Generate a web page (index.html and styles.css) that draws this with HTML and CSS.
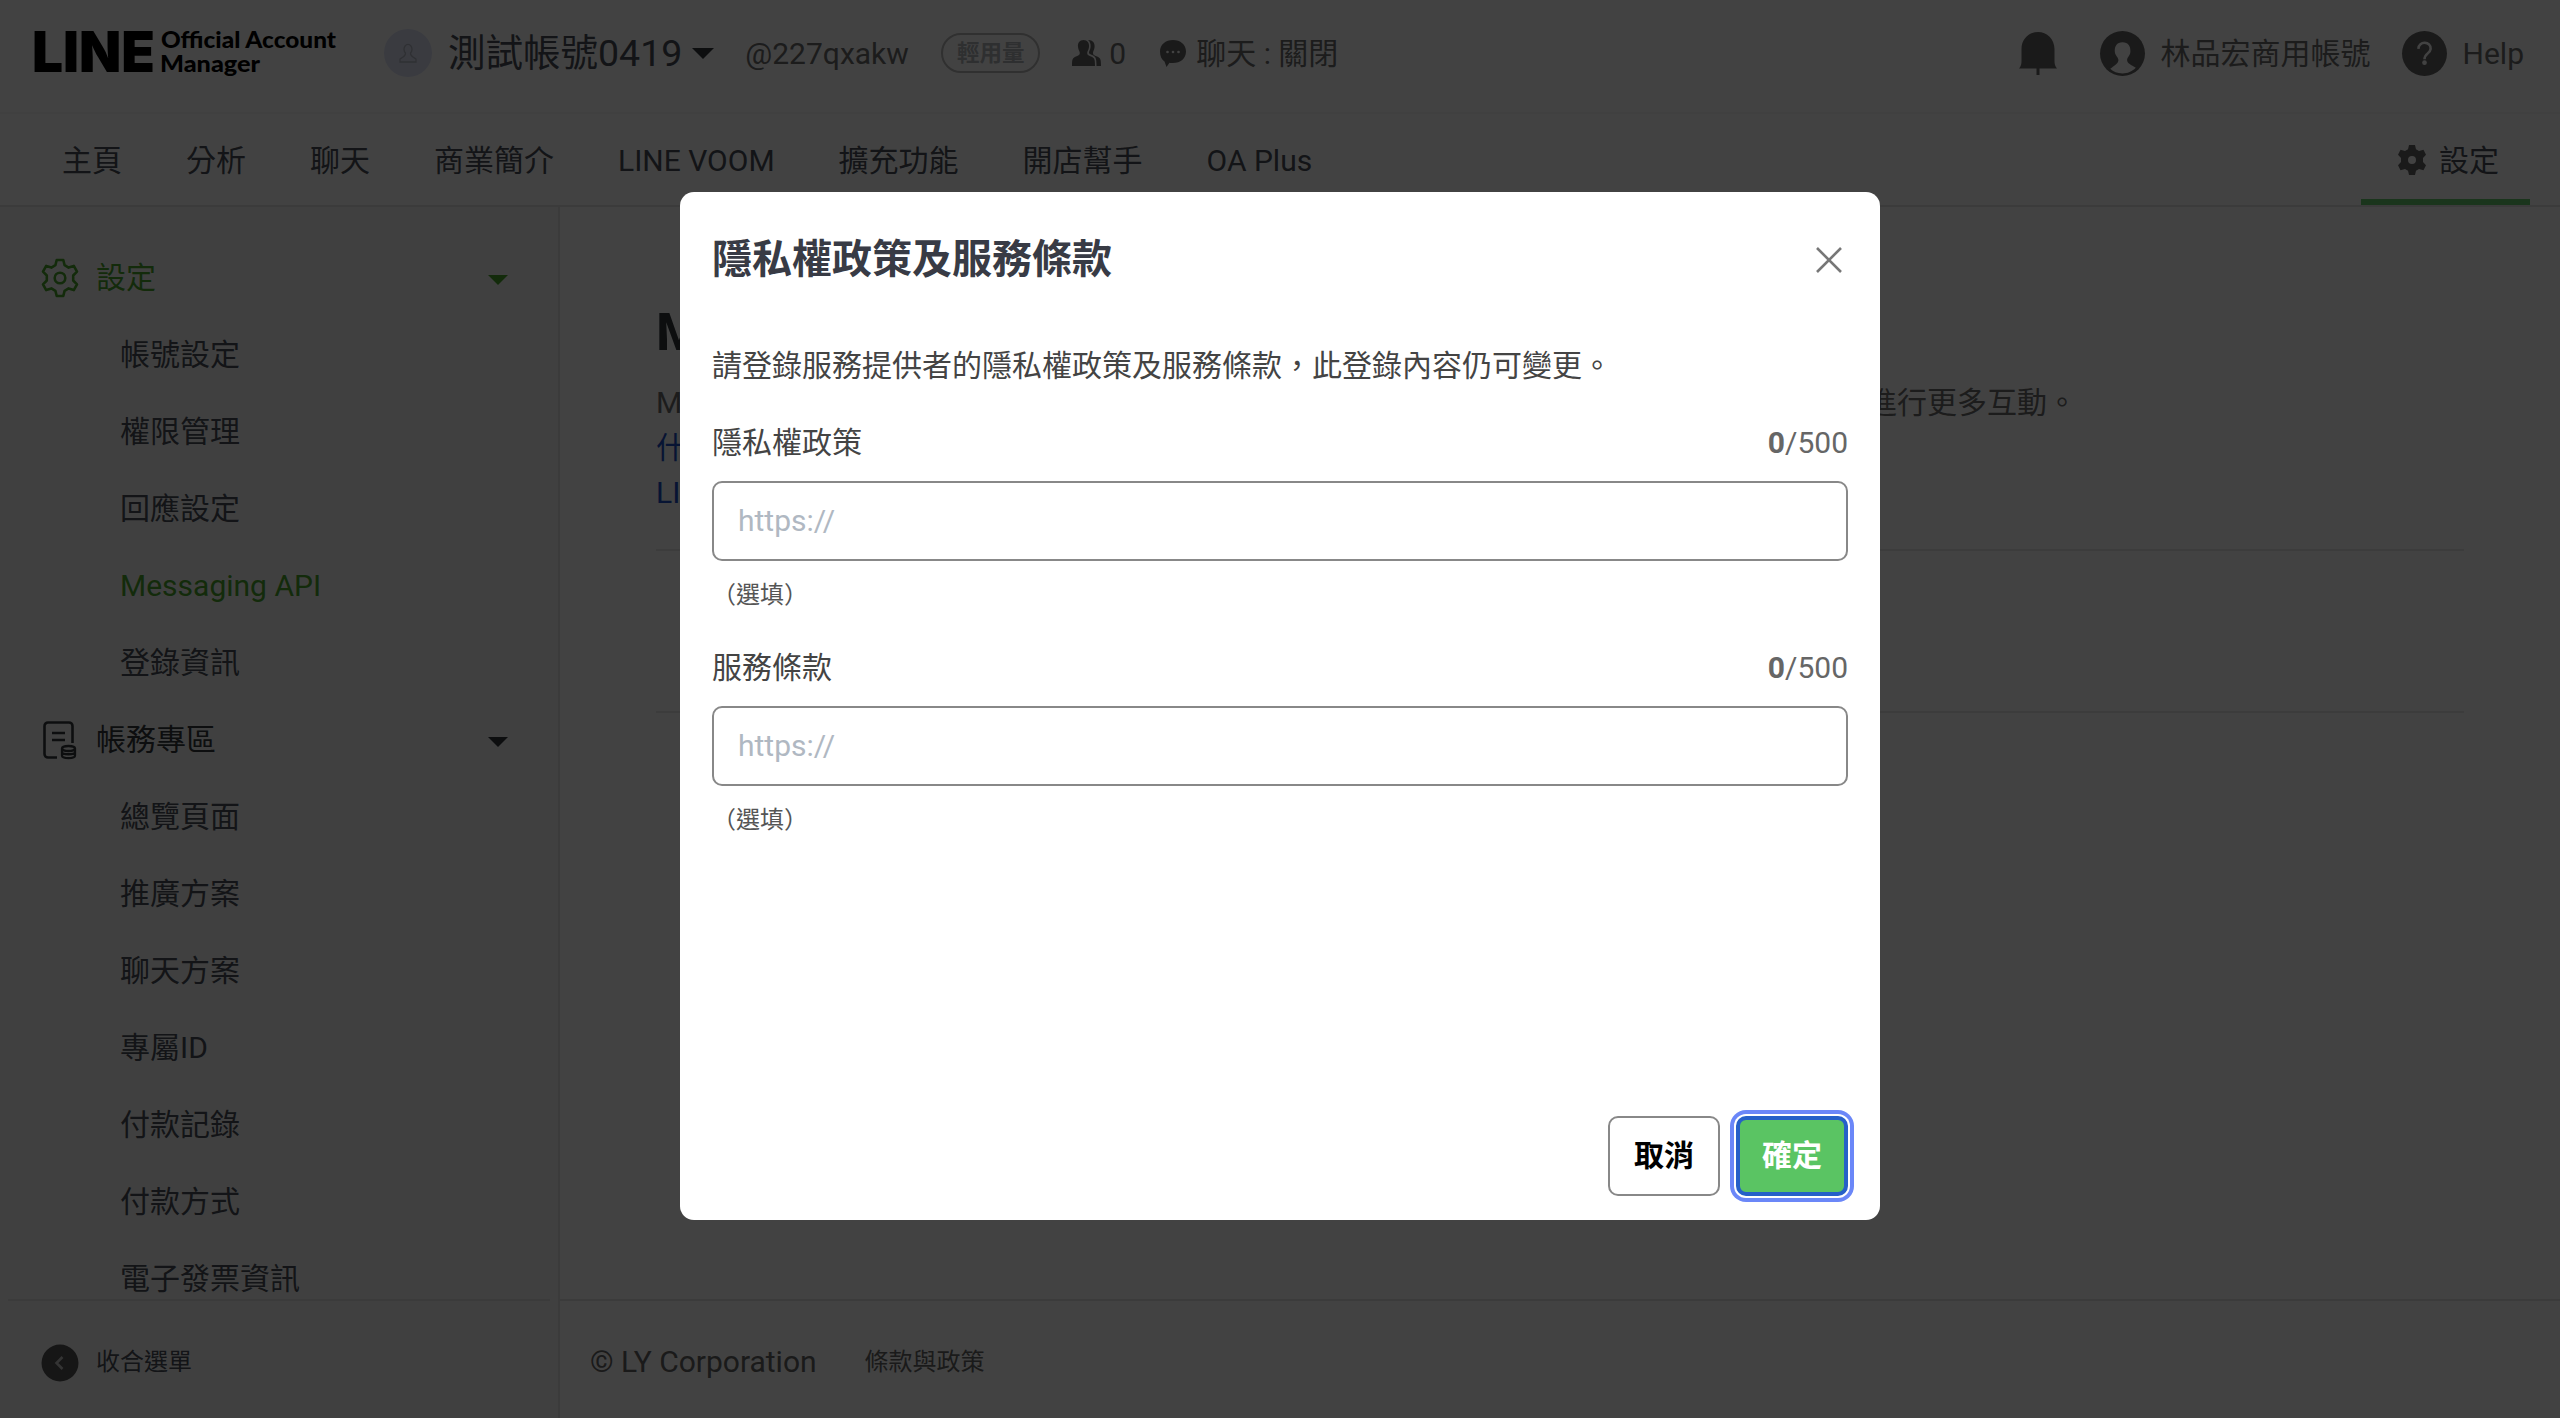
FILE: index.html
```html
<!DOCTYPE html>
<html lang="zh-Hant">
<head>
<meta charset="utf-8">
<title>LINE Official Account Manager</title>
<link rel="stylesheet" href="styles.css">
</head>
<body>
<div class="app">
  <header class="header">
    <svg class="logo" width="302" height="50" viewBox="0 0 302 50">
      <text class="logo-line" x="-4" y="44" textLength="123" lengthAdjust="spacingAndGlyphs">LINE</text>
      <text class="logo-sub" x="125" y="20" textLength="175" lengthAdjust="spacingAndGlyphs">Official Account</text>
      <text class="logo-sub" x="124" y="44" textLength="100" lengthAdjust="spacingAndGlyphs">Manager</text>
    </svg>
    <span class="avatar"><svg width="20" height="20" viewBox="0 0 20 20" fill="none" stroke="#b4b8c4" stroke-width="1.3"><path d="M7.500 10a4 4.800 0 1 1 5 0c0 3 1.500 3.500 5.500 6V19H2v-3c4-2.500 5.500-3 5.500-6z"/></svg></span>
    <span class="acct-name">測試帳號0419</span>
    <i class="caret caret-name"></i>
    <span class="acct-id">@227qxakw</span>
    <span class="badge">輕用量</span>
    <svg class="ic-users" width="30" height="26" viewBox="0 0 30 26"><path d="M11.500 0c4 0 6 3 5.500 7-.3 3-1.800 4-1.800 6s1 2.300 3.800 3.500c3.500 1.500 4 2.500 4 9.500H0c0-7 .5-8 4-9.500 2.800-1.200 3.800-1.500 3.800-3.500S6.300 10 6 7c-.5-4 1.500-7 5.500-7z"/><path d="M16 0c4.500-.3 7 3 6.600 7-.3 3-1.600 4-1.600 6s1 2.300 4 3.500c3.500 1.500 4 2.500 4 9.500h-4.500c0-8-.8-9.500-4.500-11-2.500-1-3-1.200-3-2.500 0-1.500 1.300-2.500 1.600-5.500C18.900 4 18 1.500 16 0z"/></svg>
    <span class="count">0</span>
    <svg class="ic-chat" width="28" height="28" viewBox="0 0 28 28"><path d="M14 1c7.500 0 13 4.500 13 11.500S21.500 24 14 24c-1.500 0-2.500 0-3.500-.3L7.500 28l-2-5.500C2.500 20.500 1 17 1 12.500 1 5.500 6.500 1 14 1z"/><g fill="#fff"><circle cx="8.500" cy="13" r="1.300"/><circle cx="14" cy="13" r="1.300"/><circle cx="19.500" cy="13" r="1.300"/></g></svg>
    <span class="chat">聊天 : 關閉</span>
    <div class="header-right">
      <svg class="ic-bell" width="38" height="43" viewBox="0 0 38 43"><path d="M19 0C28 0 35.500 7 35.500 17v12c0 3 .5 5 2.500 7.500H20.500V43h-3V36.500H0C2 34 2.500 32 2.500 29V17C2.500 7 10 0 19 0z"/></svg>
      <svg class="ic-me" width="45" height="45" viewBox="0 0 44 44"><circle cx="22" cy="22" r="22"/><path fill="#fff" d="M22 11c5.500 0 8.200 4 7.700 9.500-.4 4-3.200 5-3.200 8 0 2.800 4 4.500 8.500 7.500C31 40 27 41.500 22 41.500S13 40 10 37c4-3.500 8-5.500 8-8.500s-3-4-3.500-8C14 15 16.500 11 22 11z"/></svg>
      <span class="me">林品宏商用帳號</span>
      <svg class="ic-help" width="45" height="45" viewBox="0 0 44 44"><circle cx="22" cy="22" r="22"/><path d="M16 17.500c.3-8.500 12.500-7.500 12 0-.3 4.500-6 4.500-6 10" fill="none" stroke="#fff" stroke-width="2.500"/><circle cx="22" cy="31" r="2.300" fill="#fff"/></svg>
      <span>Help</span>
    </div>
  </header>
  <nav class="nav">
    <a>主頁</a><a>分析</a><a>聊天</a><a>商業簡介</a><a>LINE VOOM</a><a>擴充功能</a><a>開店幫手</a><a>OA Plus</a>
    <a class="nav-settings"><svg width="28" height="30" viewBox="0 0 28 30"><path fill-rule="evenodd" d="M11 0h6l1 4.300 3 1.800L25.500 4.800l2.500 5-3 3.200v4l3 3.200-2.500 5L21 24l-3 1.700L17 30h-6l-1-4.300L7 24l-4.500 1.200-2.500-5L3 17v-4L0 9.800l2.500-5L7 6.100l3-1.800zM14 11a4 4 0 1 0 0 8 4 4 0 0 0 0-8z"/></svg><span>設定</span></a>
  </nav>
  <div class="body">
    <aside class="side">
      <div class="menu">
        <div class="group group-on"><svg width="38" height="40" viewBox="0 0 38 40" fill="none" stroke="currentColor" stroke-width="2.600" stroke-linejoin="round"><path d="M15.700 2h6.600l1.300 5.200 4 2.400 5.200-1.700 3.200 5.800-3.800 3.800v5l3.800 3.800-3.200 5.800-5.200-1.700-4 2.400L22.300 38h-6.600l-1.300-5.200-4-2.400-5.200 1.700L2 26.300l3.800-3.800v-5L2 13.700l3.200-5.800 5.200 1.700 4-2.400z"/><circle cx="19" cy="20" r="5.300"/></svg><span>設定</span><i class="caret"></i></div>
        <a>帳號設定</a><a>權限管理</a><a>回應設定</a><a class="on">Messaging API</a><a>登錄資訊</a>
        <div class="group"><svg width="38" height="40" viewBox="0 0 38 40" fill="none" stroke="currentColor" stroke-width="2.600"><path d="M16 37.500H7a3.500 3.500 0 0 1-3.500-3.500V6A3.500 3.500 0 0 1 7 2.500h21A3.500 3.500 0 0 1 31.500 6v17M11 13h13M11 20h13"/><path stroke-width="2.300" d="M21 28.500v7c0 3.500 13 3.500 13 0v-7M21 32c0 3 13 3 13 0"/><ellipse stroke-width="2.300" cx="27.500" cy="28.500" rx="6.500" ry="2.500"/></svg><span>帳務專區</span><i class="caret"></i></div>
        <a>總覽頁面</a><a>推廣方案</a><a>聊天方案</a><a>專屬ID</a><a>付款記錄</a><a>付款方式</a><a>電子發票資訊</a>
      </div>
      <div class="collapse"><svg width="38" height="38" viewBox="0 0 38 38"><circle cx="19" cy="19" r="18.500"/><path d="M21.500 13L15.500 19l6 6" fill="none" stroke="#c8c8c8" stroke-width="2.500"/></svg><span>收合選單</span></div>
    </aside>
    <div class="main">
      <section class="content">
        <h1>Messaging API</h1>
        <p class="desc"><span>Messaging API可串接LINE官方帳號</span><span>與好友進行更多互動。</span></p>
        <a class="link">什麼是Messaging API</a>
        <a class="link">LINE Developers</a>
        <div class="panel"></div>
      </section>
      <footer class="footer"><span>© LY Corporation</span><small>條款與政策</small></footer>
    </div>
  </div>
</div>
<div class="overlay">
  <div class="modal">
    <div class="modal-head"><h2>隱私權政策及服務條款</h2><svg width="26" height="26" viewBox="0 0 26 26"><path d="M1 1l24 24M25 1L1 25" stroke="#777" stroke-width="2.600"/></svg></div>
    <p class="lead">請登錄服務提供者的隱私權政策及服務條款，此登錄內容仍可變更。</p>
    <div class="field">
      <div class="field-top"><label>隱私權政策</label><span class="counter"><b>0</b>/500</span></div>
      <input type="text" placeholder="https://">
      <small>（選填）</small>
    </div>
    <div class="field">
      <div class="field-top"><label>服務條款</label><span class="counter"><b>0</b>/500</span></div>
      <input type="text" placeholder="https://">
      <small>（選填）</small>
    </div>
    <div class="actions"><button class="btn">取消</button><button class="btn btn-ok">確定</button></div>
  </div>
</div>
</body>
</html>
```
FILE: styles.css
```css
* { box-sizing: border-box; }
body {
  margin: 0;
  font: 30px/45px Roboto, "Noto Sans CJK TC", sans-serif;
  color: #4a5058;
  overflow: hidden;
}
svg { display: block; flex: none; overflow: visible; }
.app { height: 1418px; display: flex; flex-direction: column; background: #fff; }

.header {
  height: 114px;
  padding: 0 36px 6px;
  display: flex;
  align-items: center;
  border-bottom: 2px solid #f6f6f6;
  color: #6e6e6e;
  white-space: nowrap;
}
.header svg { fill: #666; }
.header .logo { fill: #000; }
.logo-line { font: 900 57px Inter, sans-serif; }
.logo-sub { font: 900 23px Lato, sans-serif; }
.avatar {
  width: 48px; height: 48px;
  margin: 0 0 0 46px;
  border-radius: 50%;
  background: #dfe4f8;
  display: flex; align-items: center; justify-content: center;
}
.header .avatar svg { fill: none; }
.acct-name { margin-left: 16px; font-size: 37.500px; color: #4a5058; }
.caret {
  width: 0; height: 0;
  border: 10px solid transparent;
  border-top-color: currentColor;
  border-bottom: 0;
}
.caret-name { border-width: 11px 11px 0; margin: 1px 0 0 10px; color: #33383c; }
.acct-id { margin-left: 31px; width: 165px; }
.badge {
  margin-left: 31px;
  width: 99px; height: 40px;
  border: 2px solid #b8b8b8;
  border-radius: 20px;
  font-size: 22.500px; font-weight: 700; line-height: 36px;
  text-align: center;
  color: #b0b4b8;
}
.header .ic-users { margin-left: 32px; }
.count { margin-left: 7px; }
.header .ic-chat { margin-left: 33px; }
.chat { margin-left: 9px; }
.header-right { margin-left: auto; display: flex; align-items: center; }
.ic-me { margin-left: 43px; }
.me { margin-left: 16px; }
.ic-help { margin: 0 16px 0 31px; }

.nav {
  height: 93px;
  padding: 0 30px;
  display: flex;
  border-bottom: 2px solid #e2e3e5;
}
.nav a { padding: 0 32px; line-height: 93px; white-space: nowrap; }
.nav .nav-settings {
  margin-left: auto;
  width: 169px;
  padding: 7px 0 0 37px;
  display: flex; align-items: center; gap: 13px;
  line-height: 45px;
  border-bottom: 6px solid #64cc6c;
}
.nav-settings svg { fill: #666; }

.body { flex: 1; min-height: 0; display: flex; }
.side {
  width: 560px;
  display: flex; flex-direction: column;
  background: #f8f8f8;
  border-right: 2px solid #e2e3e5;
}
.menu { height: 1092px; padding-top: 32px; overflow: hidden; display: flex; flex-direction: column; }
.menu a { flex: none; height: 77px; padding: 16px 0 0 120px; }
.menu .on, .menu .group-on { color: #4ca52c; }
.group {
  flex: none;
  height: 77px;
  padding: 0 50px 0 41px;
  display: flex; align-items: center; gap: 17px;
  color: #33383c;
}
.group .caret { margin: 5px 0 0 auto; }
.group span { margin-top: -1px; }
.collapse {
  flex: 1;
  margin: 0 8px;
  padding: 0 0 0 33px;
  border-top: 2px solid #e2e3e5;
  display: flex; align-items: center; gap: 17px;
  font-size: 24px;
}
.collapse svg { margin-top: 7px; fill: #555; }
.collapse span { margin-top: 5px; }

.main { flex: 1; display: flex; flex-direction: column; }
.content { height: 1092px; padding: 90px 96px 0; }
h1 { margin: 0 0 21px; font-size: 52.500px; line-height: 71px; color: #33383c; }
.desc { margin: -9px 0 0; width: 1421px; display: flex; justify-content: space-between; color: #6e6e6e; }
.link { display: block; color: #1d4fc4; }
.panel { height: 164px; margin-top: 34px; border: solid #e8e8e8; border-width: 2px 0; }
.footer {
  flex: 1;
  padding: 3px 0 0 30px;
  border-top: 2px solid #e2e3e5;
  display: flex; align-items: center; gap: 48px;
  color: #666;
}
.footer small { font-size: 24px; margin-top: 2px; }

.overlay {
  position: fixed;
  inset: 0;
  background: rgba(0, 0, 0, .742);
  padding-top: 192px;
}
.modal {
  width: 1200px; height: 1028px;
  margin: 0 auto;
  padding: 0 32px 24px;
  border-radius: 14px;
  background: #fff;
  color: #444;
  display: flex; flex-direction: column;
}
.modal-head { height: 136px; padding-right: 6px; display: flex; align-items: center; justify-content: space-between; }
h2 { margin: 0; font-size: 40px; line-height: 60px; color: #383b45; }
.lead { margin: 15px 0 32px; }
.field { height: 225px; }
.field-top { display: flex; justify-content: space-between; }
.counter { color: #666; }
.field input {
  display: block;
  width: 100%; height: 80px;
  margin: 16px 0 16px;
  padding: 0 24px 1px;
  border: 2px solid #888;
  border-radius: 10px;
  font: inherit;
  color: #444;
}
.field input::placeholder { color: #b0b8c2; }
.field small { display: block; font-size: 24px; line-height: 36px; color: #555; }
.actions { margin-top: auto; display: flex; justify-content: flex-end; gap: 16px; }
.btn {
  width: 112px; height: 80px;
  padding: 0 0 2px;
  border: 2px solid #888;
  border-radius: 10px;
  background: #fff;
  font: inherit; font-weight: 700;
  color: #000;
}
.btn-ok {
  border: 4px solid #2660c8;
  background: #5ac463;
  color: #fff;
  box-shadow: 0 0 0 2px #fff, 0 0 0 6px #6b87f8;
}
```
